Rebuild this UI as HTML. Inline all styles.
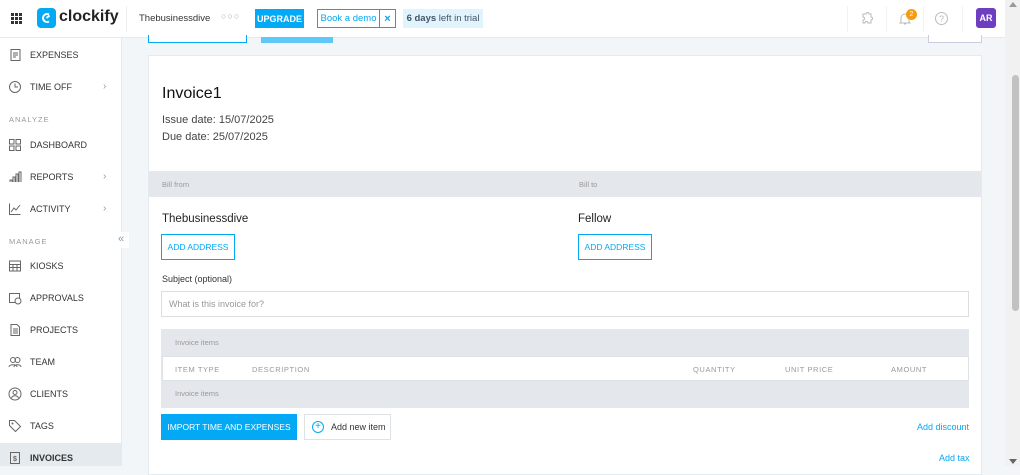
<!DOCTYPE html>
<html><head><style>
*{box-sizing:border-box;margin:0;padding:0}
body{width:1020px;height:466px;overflow:hidden;font-family:"Liberation Sans",sans-serif;background:#f2f6f8;position:relative;color:#333}
.abs{position:absolute}
.hdr{left:0;top:0;width:1005px;height:38px;background:#fff;border-bottom:1px solid #e4eaee}
.side{left:0;top:38px;width:122px;height:428px;background:#fff;border-right:1px solid #e4eaee}
.nav{position:absolute;left:8px;font-size:9px;color:#333;display:flex;align-items:center}
.nav svg{width:14px;height:14px;margin-right:8px}
.sec{position:absolute;left:9px;font-size:7.5px;color:#999;letter-spacing:1px}
.chev{position:absolute;left:103px;font-size:10px;color:#999}
.card{left:148px;top:55px;width:834px;height:420px;background:#fff;border:1px solid #e4eaee}
.blue{color:#03a9f4}
.btnO{border:1px solid #03a9f4;color:#03a9f4;font-size:8.5px;display:flex;align-items:center;justify-content:center;background:#fff}
.th{font-size:7.5px;color:#999;letter-spacing:0.6px}
</style></head><body>
<div class="abs hdr"></div>
<div class="abs" style="left:11px;top:13px;width:11px;height:11px;display:grid;grid-template-columns:repeat(3,3px);gap:1px">
<i style="background:#333"></i><i style="background:#333"></i><i style="background:#333"></i><i style="background:#333"></i><i style="background:#333"></i><i style="background:#333"></i><i style="background:#333"></i><i style="background:#333"></i><i style="background:#333"></i></div>
<div class="abs" style="left:37px;top:8px;width:19px;height:20px;background:#03a9f4;border-radius:4px"></div>
<svg class="abs" style="left:40px;top:11px" width="13" height="14" viewBox="0 0 13 14"><path d="M9 3.5A4 4 0 1 0 9 10.5" stroke="#fff" stroke-width="2" fill="none"/><path d="M6.5 7L9.5 4.5" stroke="#fff" stroke-width="2"/></svg>
<div class="abs" style="left:59px;top:8px;font-size:16px;font-weight:bold;color:#222">clockify</div>
<div class="abs" style="left:126px;top:6px;width:1px;height:26px;background:#eee"></div>
<div class="abs" style="left:139px;top:13px;font-size:9.5px;color:#333">Thebusinessdive</div>
<div class="abs" style="left:221px;top:11px;font-size:9px;color:#aaa;letter-spacing:1px">○○○</div>
<div class="abs" style="left:255px;top:9px;width:49px;height:19px;background:#03a9f4;color:#fff;font-size:9px;font-weight:bold;display:flex;align-items:center;justify-content:center">UPGRADE</div>
<div class="abs btnO" style="left:317px;top:9px;width:63px;height:19px;font-size:9.5px">Book a demo</div>
<div class="abs btnO" style="left:379px;top:9px;width:17px;height:19px;font-size:11px;font-weight:bold">×</div>
<div class="abs" style="left:403px;top:9px;width:80px;height:19px;background:#e1f3fd;color:#456;font-size:9.5px;display:flex;align-items:center;justify-content:center"><b style="font-weight:bold">6 days</b>&nbsp;left in trial</div>
<div class="abs" style="left:847px;top:6px;width:1px;height:26px;background:#f2f2f2"></div>
<div class="abs" style="left:886px;top:6px;width:1px;height:26px;background:#f2f2f2"></div>
<div class="abs" style="left:923px;top:6px;width:1px;height:26px;background:#f2f2f2"></div>
<div class="abs" style="left:962px;top:6px;width:1px;height:26px;background:#f2f2f2"></div>
<svg class="abs" style="left:860px;top:11px" width="14" height="14" viewBox="0 0 14 14"><path d="M3 3h3a1.5 1.5 0 0 1 3 0h2v3a1.5 1.5 0 0 1 0 3v3H8a1.5 1.5 0 0 0-3 0H3V9a1.5 1.5 0 0 0 0-3z" fill="none" stroke="#bbb"/></svg>
<svg class="abs" style="left:898px;top:11px" width="14" height="15" viewBox="0 0 14 15"><path d="M3 11V7a4 4 0 0 1 8 0v4l1 1H2zM6 13h2" fill="none" stroke="#bbb"/></svg>
<div class="abs" style="left:906px;top:9px;width:11px;height:11px;border-radius:50%;background:#f39c12;color:#fff;font-size:7px;text-align:center;line-height:11px">2</div>
<div class="abs" style="left:935px;top:12px;width:13px;height:13px;border:1px solid #bbb;border-radius:50%;font-size:9px;color:#bbb;text-align:center;line-height:12px">?</div>
<div class="abs" style="left:976px;top:8px;width:20px;height:20px;border-radius:3px;background:#6d3fc0;color:#fff;font-size:9px;font-weight:bold;text-align:center;line-height:20px">AR</div>

<div class="abs side"></div>
<div class="nav" style="top:48px"><svg viewBox="0 0 14 14"><rect x="3" y="1.5" width="9" height="11" fill="none" stroke="#666"/><path d="M5 5h5M5 7h5M5 9h3" stroke="#666"/></svg>EXPENSES</div>
<div class="nav" style="top:80px"><svg viewBox="0 0 14 14"><circle cx="7" cy="7" r="5.5" fill="none" stroke="#666"/><path d="M7 3.5V7h3" fill="none" stroke="#666"/></svg>TIME OFF</div><div class="chev" style="top:81px">›</div>
<div class="sec" style="top:115px">ANALYZE</div>
<div class="nav" style="top:138px"><svg viewBox="0 0 14 14"><rect x="1.5" y="1.5" width="4.5" height="4.5" fill="none" stroke="#666"/><rect x="8" y="1.5" width="4.5" height="4.5" fill="none" stroke="#666"/><rect x="1.5" y="8" width="4.5" height="4.5" fill="none" stroke="#666"/><rect x="8" y="8" width="4.5" height="4.5" fill="none" stroke="#666"/></svg>DASHBOARD</div>
<div class="nav" style="top:170px"><svg viewBox="0 0 14 14"><path d="M2 12V10h2v2M5 12V7h2v5M8 12V4h2v8M11 12V2h2v10" fill="none" stroke="#666"/></svg>REPORTS</div><div class="chev" style="top:171px">›</div>
<div class="nav" style="top:202px"><svg viewBox="0 0 14 14"><path d="M1.5 1.5v11h11M3 10l3-4 2 2 4-5" fill="none" stroke="#666"/></svg>ACTIVITY</div><div class="chev" style="top:203px">›</div>
<div class="sec" style="top:237px">MANAGE</div>
<div class="abs" style="left:113px;top:232px;width:16px;height:16px;background:#fff;font-size:11px;color:#999;text-align:center;line-height:15px">«</div>
<div class="nav" style="top:259px"><svg viewBox="0 0 14 14"><rect x="1.5" y="2" width="11" height="10" fill="none" stroke="#666"/><path d="M1.5 5.5h11M1.5 8.5h11M5 5.5v6.5M9 5.5v6.5" stroke="#666"/></svg>KIOSKS</div>
<div class="nav" style="top:291px"><svg viewBox="0 0 14 14"><rect x="1.5" y="2.5" width="10" height="9" fill="none" stroke="#666"/><circle cx="10" cy="10" r="3" fill="#fff" stroke="#666"/></svg>APPROVALS</div>
<div class="nav" style="top:323px"><svg viewBox="0 0 14 14"><path d="M3 1.5h6l2.5 2.5v8.5H3z M5 6h5M5 8h5M5 10h5" fill="none" stroke="#666"/></svg>PROJECTS</div>
<div class="nav" style="top:355px"><svg viewBox="0 0 14 14"><circle cx="5" cy="5" r="2.5" fill="none" stroke="#666"/><circle cx="9.5" cy="5" r="2.5" fill="none" stroke="#666"/><path d="M1 12c0-3 8-3 8 0M6 12c0-3 7-3 7 0" fill="none" stroke="#666"/></svg>TEAM</div>
<div class="nav" style="top:387px"><svg viewBox="0 0 14 14"><circle cx="7" cy="7" r="6" fill="none" stroke="#666"/><circle cx="7" cy="5.5" r="2" fill="none" stroke="#666"/><path d="M3.5 11c1-3 6-3 7 0" fill="none" stroke="#666"/></svg>CLIENTS</div>
<div class="nav" style="top:419px"><svg viewBox="0 0 14 14"><path d="M1.5 1.5h5l6 6-5 5-6-6z" fill="none" stroke="#666"/><circle cx="4.5" cy="4.5" r="1" fill="#666"/></svg>TAGS</div>
<div class="abs" style="left:0;top:443px;width:121px;height:23px;background:#e4eaee"></div>
<div class="nav" style="top:451px;font-weight:bold"><svg viewBox="0 0 14 14"><rect x="2.5" y="1.5" width="9" height="11" fill="none" stroke="#666"/><text x="5" y="10" font-size="7" fill="#666">$</text></svg>INVOICES</div>

<div class="abs" style="left:148px;top:35px;width:99px;height:8px;border:1px solid #03a9f4;border-top:none;background:#fff"></div>
<div class="abs" style="left:261px;top:37px;width:72px;height:6px;background:#5ec8f8"></div>
<div class="abs" style="left:928px;top:35px;width:54px;height:8px;border:1px solid #ccd;border-top:none;background:#fff"></div>

<div class="abs card"></div>
<div class="abs" style="left:162px;top:85px;font-size:16px;color:#111">Invoice1</div>
<div class="abs" style="left:162px;top:114px;font-size:11px;color:#444">Issue date: 15/07/2025</div>
<div class="abs" style="left:162px;top:131px;font-size:11px;color:#444">Due date: 25/07/2025</div>
<div class="abs" style="left:149px;top:171px;width:832px;height:26px;background:#e4e8ec"></div>
<div class="abs" style="left:162px;top:180px;font-size:7.5px;color:#999">Bill from</div>
<div class="abs" style="left:579px;top:180px;font-size:7.5px;color:#999">Bill to</div>
<div class="abs" style="left:162px;top:213px;font-size:11.5px;color:#222">Thebusinessdive</div>
<div class="abs" style="left:578px;top:213px;font-size:11.5px;color:#222">Fellow</div>
<div class="abs btnO" style="left:161px;top:234px;width:74px;height:26px">ADD ADDRESS</div>
<div class="abs btnO" style="left:578px;top:234px;width:74px;height:26px">ADD ADDRESS</div>
<div class="abs" style="left:162px;top:274px;font-size:9px;color:#333">Subject (optional)</div>
<div class="abs" style="left:161px;top:291px;width:808px;height:26px;border:1px solid #ddd;font-size:9px;color:#999;padding:7px 7px">What is this invoice for?</div>
<div class="abs" style="left:161px;top:329px;width:808px;height:79px;background:#e4e8ec"></div>
<div class="abs" style="left:175px;top:338px;font-size:7.5px;color:#999">Invoice items</div>
<div class="abs" style="left:162px;top:356px;width:807px;height:25px;background:#fff;border:1px solid #dde2e6"></div>
<div class="abs th" style="left:175px;top:365px">ITEM TYPE</div>
<div class="abs th" style="left:252px;top:365px">DESCRIPTION</div>
<div class="abs th" style="left:693px;top:365px">QUANTITY</div>
<div class="abs th" style="left:785px;top:365px">UNIT PRICE</div>
<div class="abs th" style="left:891px;top:365px">AMOUNT</div>
<div class="abs" style="left:175px;top:389px;font-size:7.5px;color:#999">Invoice items</div>
<div class="abs" style="left:161px;top:414px;width:136px;height:26px;background:#03a9f4;color:#fff;font-size:8.5px;display:flex;align-items:center;justify-content:center">IMPORT TIME AND EXPENSES</div>
<div class="abs" style="left:304px;top:414px;width:87px;height:26px;border:1px solid #dde2e6;background:#fff;font-size:9px;color:#333;display:flex;align-items:center;padding-left:7px"><span style="display:inline-block;width:12px;height:12px;border:1px solid #03a9f4;border-radius:50%;color:#03a9f4;font-size:10px;line-height:10px;text-align:center;margin-right:7px">+</span>Add new item</div>
<div class="abs blue" style="left:917px;top:422px;font-size:9px">Add discount</div>
<div class="abs blue" style="left:939px;top:453px;font-size:9px">Add tax</div>

<div class="abs" style="left:1005px;top:0;width:15px;height:466px;background:#f1f1f1"></div>
<div class="abs" style="left:1009px;top:2px;width:0;height:0;border-left:4px solid transparent;border-right:4px solid transparent;border-bottom:5px solid #999"></div>
<div class="abs" style="left:1012px;top:75px;width:7px;height:236px;background:#c1c1c1;border-radius:4px"></div>
<div class="abs" style="left:1009px;top:459px;width:0;height:0;border-left:4px solid transparent;border-right:4px solid transparent;border-top:5px solid #666"></div>
</body></html>
